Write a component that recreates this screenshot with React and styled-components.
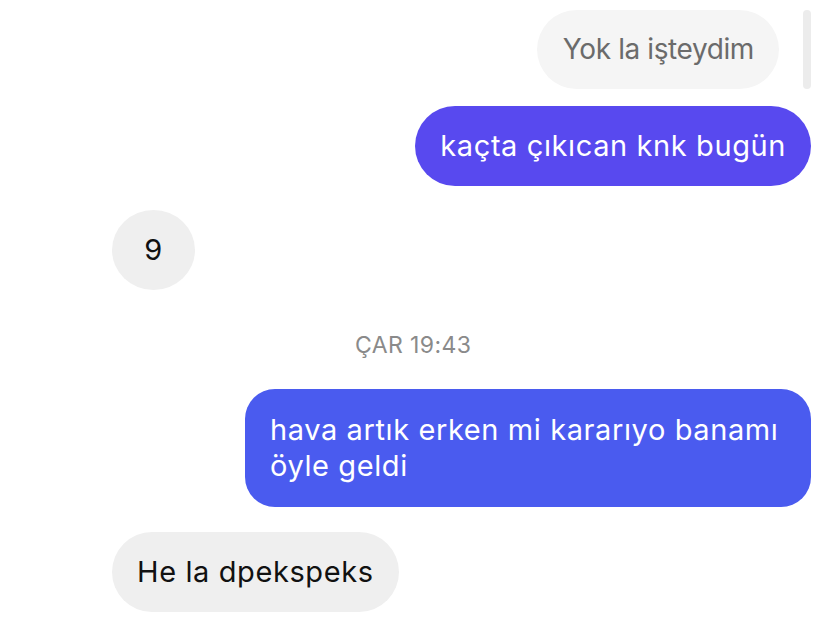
import styled, { createGlobalStyle } from 'styled-components';

const GlobalStyle = createGlobalStyle`
  html, body {
    margin: 0;
    padding: 0;
    background: #ffffff;
  }
  body {
    font-family: Inter, "Noto Sans", "Liberation Sans", sans-serif;
    -webkit-font-smoothing: antialiased;
  }
`;

const Thread = styled.div`
  width: 828px;
  height: 622px;
  box-sizing: border-box;
  padding: 10px 17px 0 112px;
  display: flex;
  flex-direction: column;
  overflow: hidden;
`;

const Row = styled.div`
  display: flex;
  justify-content: ${p => (p.$mine ? 'flex-end' : 'flex-start')};
  align-items: stretch;
  margin-top: ${p => p.$gap || 0}px;
`;

const Bubble = styled.div`
  box-sizing: border-box;
  max-width: 566px;
  padding: ${p => (p.$multi ? '23px 25px' : '22px 25px')};
  border-radius: ${p => (p.$multi ? '30px' : '40px')};
  font-size: 29px;
  line-height: 36px;
  letter-spacing: 0.6px;
  color: ${p => (p.$mine ? '#ffffff' : '#111111')};
  background: ${p => (p.$mine ? p.$tint || '#5849ef' : '#efefef')};
`;

const RoundBubble = styled(Bubble)`
  width: 83px;
  height: 80px;
  padding: 0;
  border-radius: 50%;
  display: flex;
  align-items: center;
  justify-content: center;
`;

const Quote = styled.div`
  display: flex;
  gap: 24px;
  align-items: stretch;
`;

const QuoteBubble = styled.div`
  padding: 21px 25px 22px 26px;
  border-radius: 40px;
  background: #f5f5f5;
  color: #6b6b6b;
  font-size: 28px;
  line-height: 36px;
  letter-spacing: -0.4px;
`;

const QuoteBar = styled.div`
  width: 8px;
  border-radius: 4px;
  background: #ececec;
`;

const Stamp = styled.div`
  margin-top: 40px;
  padding-left: 243px;
  font-size: 23px;
  line-height: 30px;
  color: #8a8a8a;
  letter-spacing: 0.4px;
`;

export default function App() {
  return (
    <>
      <GlobalStyle />
      <Thread>
        <Row $mine>
          <Quote>
            <QuoteBubble>Yok la işteydim</QuoteBubble>
            <QuoteBar />
          </Quote>
        </Row>
        <Row $mine $gap={17}>
          <Bubble $mine $tint="#5849ef">kaçta çıkıcan knk bugün</Bubble>
        </Row>
        <Row $gap={24}>
          <RoundBubble>9</RoundBubble>
        </Row>
        <Stamp>ÇAR 19:43</Stamp>
        <Row $mine $gap={29}>
          <Bubble $mine $multi $tint="#4a5bef">
            hava artık erken mi kararıyo banamı öyle geldi
          </Bubble>
        </Row>
        <Row $gap={25}>
          <Bubble>He la dpekspeks</Bubble>
        </Row>
      </Thread>
    </>
  );
}
